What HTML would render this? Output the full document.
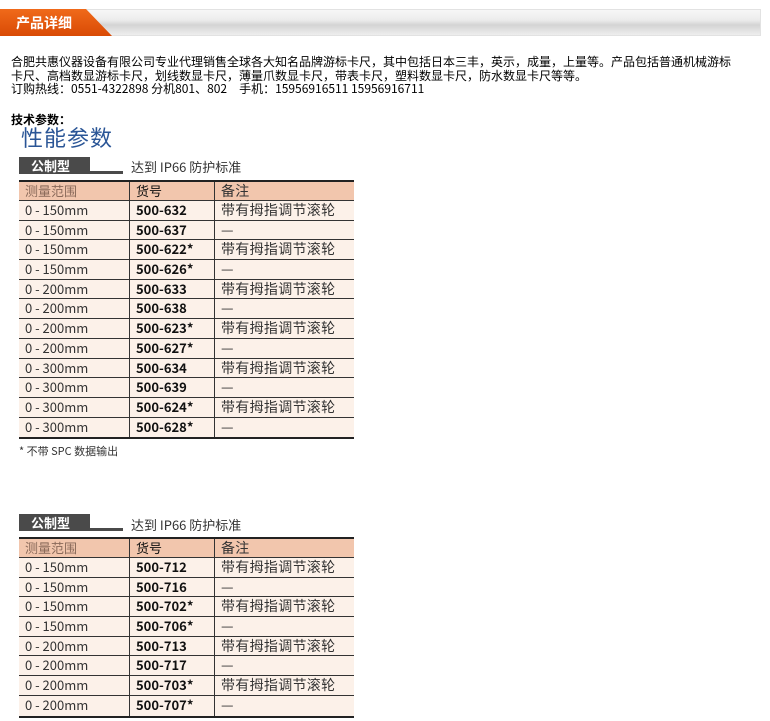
<!DOCTYPE html>
<html><head><meta charset="utf-8"><style>
*{margin:0;padding:0;box-sizing:border-box}
body{width:770px;height:721px;background:#fff;position:relative;overflow:hidden;font-family:"Liberation Sans","Noto Sans CJK SC",sans-serif;color:#000}
.bar{position:absolute;left:0;top:9px;width:761px;height:27px;background:linear-gradient(#f7f7f7,#ececec 40%,#d4d4d4 60%,#eee);border:1px solid #e2e2e2}
.tab{position:absolute;left:0;top:9px;width:112px;height:27px;background:linear-gradient(#f06a1a,#d94a05);clip-path:polygon(0 0,86px 0,112px 100%,0 100%)}
.tabt{position:absolute;left:16px;top:13px;color:#fff;font-size:14px;font-weight:bold;font-family:"Noto Sans CJK SC",sans-serif}
.p{position:absolute;left:11px;top:55px;font-size:12px;line-height:13.5px;white-space:nowrap;font-family:"Noto Sans CJK SC",sans-serif}
.b{position:absolute;left:11px;top:111px;font-size:12px;font-weight:bold;font-family:"Noto Sans CJK SC",sans-serif}
.h{position:absolute;left:21px;top:121px;font-size:22px;color:#2a5596;font-family:"Noto Sans CJK SC",sans-serif;letter-spacing:1px}
.lab{position:absolute;left:19px;width:105px;height:17px}
.lab .d{position:absolute;left:0;top:0;width:71px;height:17px;background:#4a4a4a;color:#fff;font-weight:bold;font-size:13px;line-height:17px;padding-left:12px;font-family:"Noto Sans CJK SC",sans-serif}
.lab .l{position:absolute;left:71px;bottom:0;width:33px;height:3px;background:#4a4a4a}
.lt{position:absolute;left:131px;font-size:13px;color:#333;font-family:"Noto Sans CJK SC",sans-serif}
.t{position:absolute;left:19px;width:335px;border-top:2px solid #222;border-bottom:2px solid #222;font-size:13px;font-family:"Noto Sans CJK SC",sans-serif}
.r{display:flex;height:19.7px;line-height:18.7px;border-bottom:1px solid #333;background:#fcf1e9}
.r:last-child{border-bottom:none}
.r.hd{background:#f2c6ad;height:19px}
.r div{padding-left:6px;color:#333}
.c1{width:111px;border-right:1px solid #333}
.c2{width:85px;border-right:1px solid #333;font-weight:bold;color:#111!important}
.c3{flex:1;font-size:14px;letter-spacing:0.3px}
.hd .c1{color:#8a6a5a!important}.hd .c2{font-weight:normal}
.note{position:absolute;left:19px;top:443px;font-size:11px;color:#333;font-family:"Noto Sans CJK SC",sans-serif}
</style></head><body>
<div class="bar"></div><div class="tab"></div><div class="tabt">产品详细</div>
<div class="p">合肥共惠仪器设备有限公司专业代理销售全球各大知名品牌游标卡尺，其中包括日本三丰，英示，成量，上量等。产品包括普通机械游标<br>卡尺、高档数显游标卡尺，划线数显卡尺，薄量爪数显卡尺，带表卡尺，塑料数显卡尺，防水数显卡尺等等。<br>订购热线：0551-4322898 分机801、802　手机：15956916511 15956916711</div>
<div class="b">技术参数：</div>
<div class="h">性能参数</div>

<div class="lab" style="top:157px"><div class="d">公制型</div><div class="l"></div></div>
<div class="lt" style="top:157px">达到 IP66 防护标准</div>
<div class="t" style="top:180px">
<div class="r hd"><div class="c1">测量范围</div><div class="c2">货号</div><div class="c3">备注</div></div>
<div class="r"><div class="c1">0 - 150mm</div><div class="c2">500-632</div><div class="c3">带有拇指调节滚轮</div></div>
<div class="r"><div class="c1">0 - 150mm</div><div class="c2">500-637</div><div class="c3">—</div></div>
<div class="r"><div class="c1">0 - 150mm</div><div class="c2">500-622*</div><div class="c3">带有拇指调节滚轮</div></div>
<div class="r"><div class="c1">0 - 150mm</div><div class="c2">500-626*</div><div class="c3">—</div></div>
<div class="r"><div class="c1">0 - 200mm</div><div class="c2">500-633</div><div class="c3">带有拇指调节滚轮</div></div>
<div class="r"><div class="c1">0 - 200mm</div><div class="c2">500-638</div><div class="c3">—</div></div>
<div class="r"><div class="c1">0 - 200mm</div><div class="c2">500-623*</div><div class="c3">带有拇指调节滚轮</div></div>
<div class="r"><div class="c1">0 - 200mm</div><div class="c2">500-627*</div><div class="c3">—</div></div>
<div class="r"><div class="c1">0 - 300mm</div><div class="c2">500-634</div><div class="c3">带有拇指调节滚轮</div></div>
<div class="r"><div class="c1">0 - 300mm</div><div class="c2">500-639</div><div class="c3">—</div></div>
<div class="r"><div class="c1">0 - 300mm</div><div class="c2">500-624*</div><div class="c3">带有拇指调节滚轮</div></div>
<div class="r"><div class="c1">0 - 300mm</div><div class="c2">500-628*</div><div class="c3">—</div></div>
</div>
<div class="note">* 不带 SPC 数据输出</div>

<div class="lab" style="top:514px"><div class="d">公制型</div><div class="l"></div></div>
<div class="lt" style="top:515px">达到 IP66 防护标准</div>
<div class="t" style="top:537px">
<div class="r hd"><div class="c1">测量范围</div><div class="c2">货号</div><div class="c3">备注</div></div>
<div class="r"><div class="c1">0 - 150mm</div><div class="c2">500-712</div><div class="c3">带有拇指调节滚轮</div></div>
<div class="r"><div class="c1">0 - 150mm</div><div class="c2">500-716</div><div class="c3">—</div></div>
<div class="r"><div class="c1">0 - 150mm</div><div class="c2">500-702*</div><div class="c3">带有拇指调节滚轮</div></div>
<div class="r"><div class="c1">0 - 150mm</div><div class="c2">500-706*</div><div class="c3">—</div></div>
<div class="r"><div class="c1">0 - 200mm</div><div class="c2">500-713</div><div class="c3">带有拇指调节滚轮</div></div>
<div class="r"><div class="c1">0 - 200mm</div><div class="c2">500-717</div><div class="c3">—</div></div>
<div class="r"><div class="c1">0 - 200mm</div><div class="c2">500-703*</div><div class="c3">带有拇指调节滚轮</div></div>
<div class="r"><div class="c1">0 - 200mm</div><div class="c2">500-707*</div><div class="c3">—</div></div>
</div>
</body></html>
